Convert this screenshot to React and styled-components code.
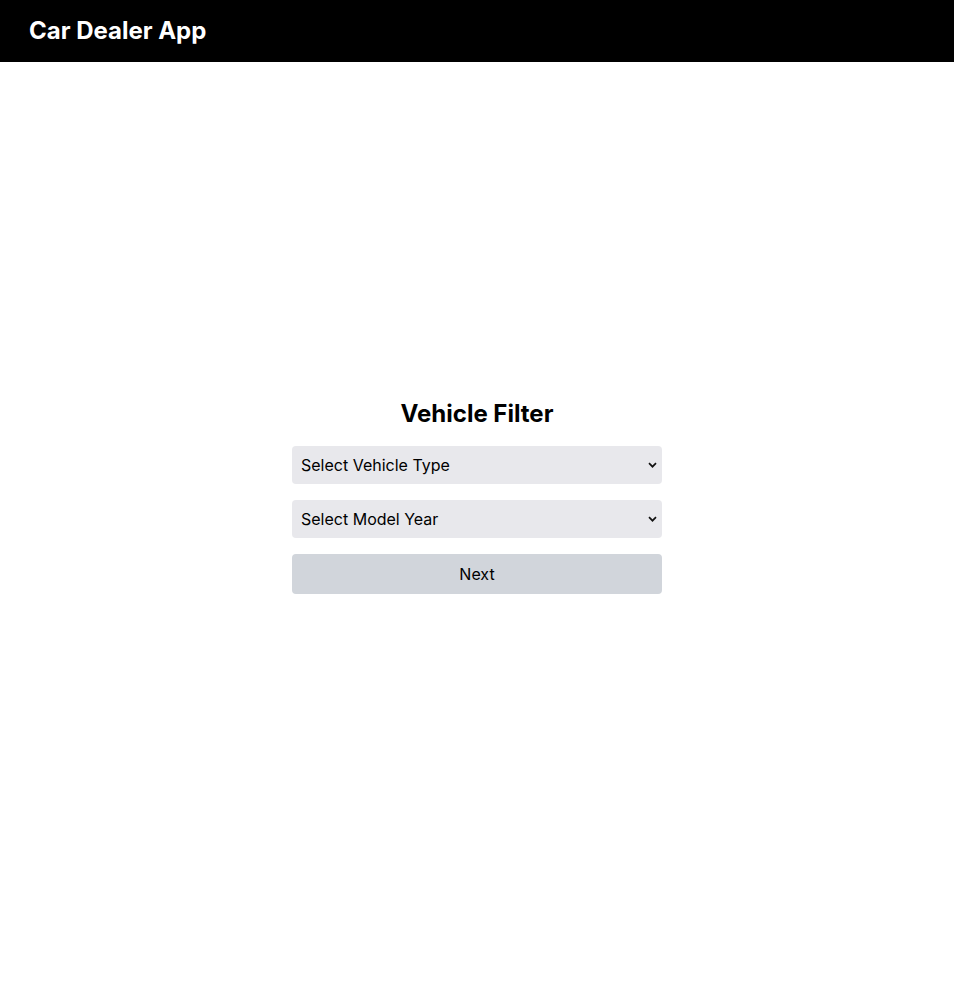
import styled, { createGlobalStyle } from "styled-components";

const GlobalStyle = createGlobalStyle`
  * { box-sizing: border-box; }
  body {
    margin: 0;
    font-family: Inter, "Noto Sans", sans-serif;
    background: #fff;
    color: #000;
  }
`;

const chevron = encodeURIComponent(
  '<svg xmlns="http://www.w3.org/2000/svg" width="9" height="6" viewBox="0 0 9 6"><path d="M1 1.2l3.5 3.5 3.5-3.5" fill="none" stroke="#111" stroke-width="1.7"/></svg>'
);

const Header = styled.header`
  height: 62px;
  background: #000;
  display: flex;
  align-items: center;
  padding: 0 29px;
`;

const Brand = styled.h1`
  margin: 0;
  color: #fff;
  font-size: 24px;
  font-weight: 700;
  line-height: 32px;
`;

const Main = styled.main`
  height: calc(100vh - 62px);
  padding-bottom: 64px;
  display: flex;
  align-items: center;
  justify-content: center;
`;

const Panel = styled.div`
  width: 370px;
  display: flex;
  flex-direction: column;
  gap: 16px;
`;

const Title = styled.h2`
  margin: 0;
  text-align: center;
  font-size: 24px;
  font-weight: 700;
  line-height: 32px;
`;

const Select = styled.select`
  appearance: none;
  width: 100%;
  height: 38px;
  padding: 0 24px 0 9px;
  border: none;
  border-radius: 4px;
  background: #e8e8ec url("data:image/svg+xml,${chevron}") no-repeat right 5px center;
  color: #000;
  font-family: inherit;
  font-size: 16px;
  outline: none;
`;

const Button = styled.button`
  width: 100%;
  height: 40px;
  border: none;
  border-radius: 4px;
  background: #d1d5db;
  color: #000;
  font-family: inherit;
  font-size: 16px;
  cursor: pointer;
`;

export default function App() {
  return (
    <>
      <GlobalStyle />
      <Header>
        <Brand>Car Dealer App</Brand>
      </Header>
      <Main>
        <Panel>
          <Title>Vehicle Filter</Title>
          <Select defaultValue="">
            <option value="">Select Vehicle Type</option>
          </Select>
          <Select defaultValue="">
            <option value="">Select Model Year</option>
          </Select>
          <Button>Next</Button>
        </Panel>
      </Main>
    </>
  );
}
